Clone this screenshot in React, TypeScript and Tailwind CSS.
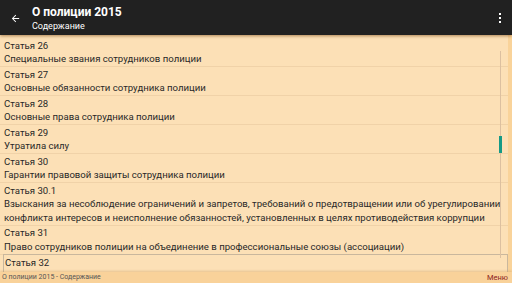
import React from "react";

const rows: { t: string; d: string[] }[] = [
  { t: "Статья 26", d: ["Специальные звания сотрудников полиции"] },
  { t: "Статья 27", d: ["Основные обязанности сотрудника полиции"] },
  { t: "Статья 28", d: ["Основные права сотрудника полиции"] },
  { t: "Статья 29", d: ["Утратила силу"] },
  { t: "Статья 30", d: ["Гарантии правовой защиты сотрудника полиции"] },
  {
    t: "Статья 30.1",
    d: [
      "Взыскания за несоблюдение ограничений и запретов, требований о предотвращении или об урегулировании",
      "конфликта интересов и неисполнение обязанностей, установленных в целях противодействия коррупции",
    ],
  },
  { t: "Статья 31", d: ["Право сотрудников полиции на объединение в профессиональные союзы (ассоциации)"] },
];

export default function App() {
  return (
    <div
      className="w-[512px] h-[283px] overflow-hidden flex flex-col bg-[#fce0b6] relative"
      style={{ fontFamily: "Roboto, 'Noto Sans', sans-serif" }}
    >
      <div className="h-[35px] bg-[#212121] flex items-center shrink-0 relative z-10 shadow-[0_1px_3px_rgba(120,70,20,0.6)]">
        <svg width="11" height="11" viewBox="0 0 24 24" className="ml-[10px] mt-[1px]" fill="white">
          <path d="M20 11H7.83l5.59-5.59L12 4l-8 8 8 8 1.41-1.41L7.83 13H20v-2z" />
        </svg>
        <div className="ml-[11px] flex flex-col leading-none">
          <div className="text-white text-[12px] font-bold mt-[2px]">О полиции 2015</div>
          <div className="text-white text-[9px] mt-[4px]">Содержание</div>
        </div>
        <div className="ml-auto mr-[11px] flex flex-col gap-[2px] mt-[1px]">
          <div className="w-[2px] h-[2px] bg-white" />
          <div className="w-[2px] h-[2px] bg-white" />
          <div className="w-[2px] h-[2px] bg-white" />
        </div>
      </div>
      <div className="flex-1 flex overflow-hidden min-h-0">
        <div className="flex-1 flex flex-col overflow-hidden pt-[3px] text-[#282828] text-[9.6px] leading-[13.5px] whitespace-nowrap">
          {rows.map((r, i) => (
            <div key={i} className="pl-[4px] pr-[4px] py-[0.5px] border-b border-[#f0d2a8] shrink-0">
              <div>{r.t}</div>
              {r.d.map((l, j) => (
                <div key={j}>{l}</div>
              ))}
            </div>
          ))}
          <div className="ml-[3px] mt-[-1px] border border-[#c9b79d] pl-[1px] pt-[1px] h-[40px] shrink-0 overflow-hidden">
            <div>Статья 32</div>
            <div className="h-[4px] overflow-hidden">Право сотрудников полиции на социальные гарантии</div>
          </div>
        </div>
        <div className="w-[4px] bg-[#f9d39a] shrink-0" />
      </div>
      <div className="absolute left-[500px] top-[51px] w-[1px] h-[207px] bg-[#dcc0a0]" />
      <div className="absolute left-[499px] top-[136px] w-[3px] h-[17px] bg-[#159a86]" />
      <div className="h-[11px] bg-[#f9d29a] shrink-0 flex items-center justify-between px-[2px] relative z-10 leading-none shadow-[0_-1px_2px_rgba(200,150,90,0.4)]">
        <span className="text-[7px] text-[#555]">О полиции 2015 - Содержание</span>
        <span className="text-[7.5px] text-[#8b1c1c] mr-[2px]">Меню</span>
      </div>
    </div>
  );
}
